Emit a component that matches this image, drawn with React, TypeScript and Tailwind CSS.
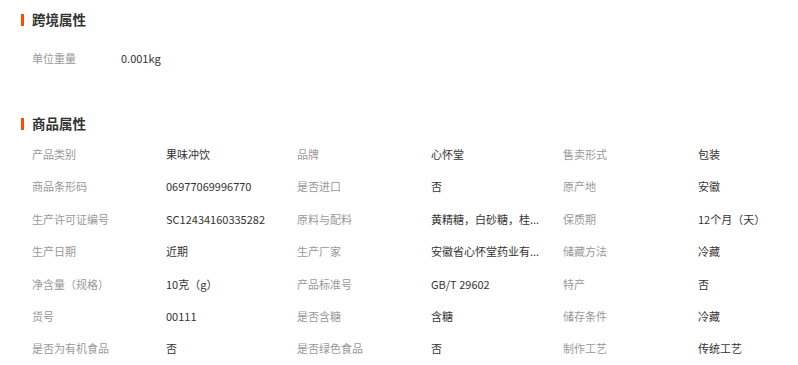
import React from "react";

const rows: [string, string][][] = [
  [["产品类别", "果味冲饮"], ["品牌", "心怀堂"], ["售卖形式", "包装"]],
  [["商品条形码", "06977069996770"], ["是否进口", "否"], ["原产地", "安徽"]],
  [["生产许可证编号", "SC12434160335282"], ["原料与配料", "黄精糖，白砂糖，桂..."], ["保质期", "12个月（天）"]],
  [["生产日期", "近期"], ["生产厂家", "安徽省心怀堂药业有..."], ["储藏方法", "冷藏"]],
  [["净含量（规格）", "10克（g）"], ["产品标准号", "GB/T 29602"], ["特产", "否"]],
  [["货号", "00111"], ["是否含糖", "含糖"], ["储存条件", "冷藏"]],
  [["是否为有机食品", "否"], ["是否绿色食品", "否"], ["制作工艺", "传统工艺"]],
];

const font = { fontFamily: '"Microsoft YaHei", "Noto Sans CJK SC", "Noto Sans", sans-serif' };

function Header({ title, h }: { title: string; h: string }) {
  return (
    <div className={`flex items-center ${h}`}>
      <div className="w-[3px] h-[12px] bg-[#ff4a00] mr-[8px]" />
      <div className="text-[13.5px] font-bold text-[#333] leading-none">{title}</div>
    </div>
  );
}

export default function App() {
  return (
    <div className="w-[798px] h-[365px] bg-white pl-[21px] overflow-hidden" style={font}>
      <Header title="跨境属性" h="h-[40px]" />
      <div className="flex items-center h-[36px] pl-[11px] text-[11px]">
        <div className="w-[89px] text-[#999]">单位重量</div>
        <div className="text-[#333]">0.001kg</div>
      </div>
      <div className="h-[33px]" />
      <Header title="商品属性" h="h-[29px]" />
      <div className="pl-[11px] text-[11px]">
        {rows.map((r, i) => (
          <div key={i} className="grid grid-cols-[134px_131px_134px_132px_135px_1fr] items-center h-[32.4px]">
            {r.map(([k, v], j) => (
              <React.Fragment key={j}>
                <div className="text-[#999] whitespace-nowrap">{k}</div>
                <div className="text-[#333] whitespace-nowrap">{v}</div>
              </React.Fragment>
            ))}
          </div>
        ))}
      </div>
    </div>
  );
}
